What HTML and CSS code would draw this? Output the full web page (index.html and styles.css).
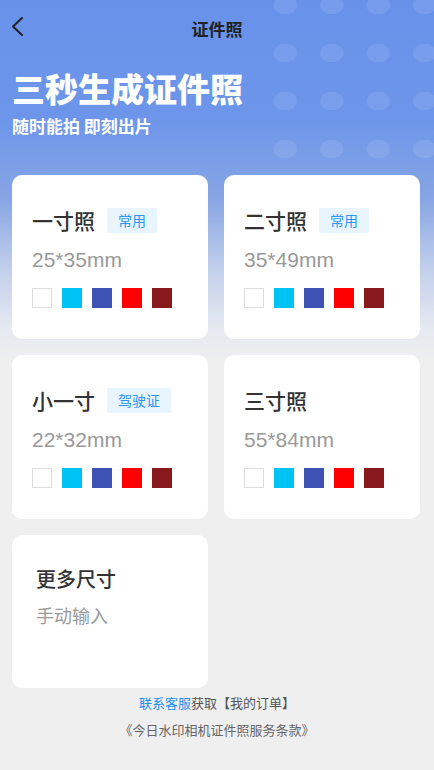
FILE: index.html
```html
<!DOCTYPE html>
<html lang="zh-CN">
<head>
    <meta charset="UTF-8">
    <meta name="viewport" content="width=device-width, initial-scale=1.0">
    <title>证件照</title>
    <link rel="stylesheet" href="styles.css">
</head>
<body>
    <div class="page">
        <div class="dots"></div>
        <div class="navbar">
            <span class="back">
                <svg width="14" height="22" viewBox="0 0 14 22"><path d="M11 2 L2 10.5 L11 19" fill="none" stroke="#222" stroke-width="2" stroke-linecap="round" stroke-linejoin="round"/></svg>
            </span>
            <div class="nav-title">证件照</div>
        </div>
        <div class="hero">
            <h1>三秒生成证件照</h1>
            <p>随时能拍 即刻出片</p>
        </div>

        <div class="grid">
            <div class="card">
                <div class="card-head">
                    <span class="card-title">一寸照</span>
                    <span class="tag">常用</span>
                </div>
                <div class="card-size">25*35mm</div>
                <div class="swatches">
                    <span class="sw white"></span><span class="sw sky"></span><span class="sw blue"></span><span class="sw red"></span><span class="sw wine"></span>
                </div>
            </div>
            <div class="card">
                <div class="card-head">
                    <span class="card-title">二寸照</span>
                    <span class="tag">常用</span>
                </div>
                <div class="card-size">35*49mm</div>
                <div class="swatches">
                    <span class="sw white"></span><span class="sw sky"></span><span class="sw blue"></span><span class="sw red"></span><span class="sw wine"></span>
                </div>
            </div>
            <div class="card">
                <div class="card-head">
                    <span class="card-title">小一寸</span>
                    <span class="tag">驾驶证</span>
                </div>
                <div class="card-size">22*32mm</div>
                <div class="swatches">
                    <span class="sw white"></span><span class="sw sky"></span><span class="sw blue"></span><span class="sw red"></span><span class="sw wine"></span>
                </div>
            </div>
            <div class="card">
                <div class="card-head">
                    <span class="card-title">三寸照</span>
                </div>
                <div class="card-size">55*84mm</div>
                <div class="swatches">
                    <span class="sw white"></span><span class="sw sky"></span><span class="sw blue"></span><span class="sw red"></span><span class="sw wine"></span>
                </div>
            </div>
            <div class="card card-more">
                <div class="more-title">更多尺寸</div>
                <div class="more-sub">手动输入</div>
            </div>
        </div>

        <div class="footer">
            <p><a href="#">联系客服</a>获取【我的订单】</p>
            <p class="terms">《今日水印相机证件照服务条款》</p>
        </div>
    </div>
</body>
</html>
```

FILE: styles.css
```css
html, body {
    margin: 0;
    padding: 0;
}
body {
    background-color: #efefef;
    font-family: "Noto Sans CJK SC", "Noto Sans", sans-serif;
    color: #333333;
}
.page {
    position: relative;
    min-height: 770px;
    overflow: hidden;
    background: linear-gradient(180deg, #6892ea 0px, #6d96ea 120px, #88a6e4 200px, #c3d0ec 270px, #e6e9f0 330px, #efefef 360px);
}
.dots {
    position: absolute;
    left: 262px;
    top: -19px;
    width: 200px;
    height: 192px;
    background-image: radial-gradient(ellipse 12px 9.5px at center, rgba(255, 255, 255, 0.09) 96%, rgba(255, 255, 255, 0) 100%);
    background-size: 46.5px 48px;
}
.navbar {
    position: relative;
    height: 56px;
    display: flex;
    align-items: center;
    justify-content: center;
}
.back {
    position: absolute;
    left: 11px;
    top: 16px;
    width: 14px;
    height: 22px;
}
.nav-title {
    font-size: 17px;
    font-weight: 700;
    color: #222222;
}
.hero {
    position: relative;
    padding: 10px 12px 0;
    color: #ffffff;
}
.hero h1 {
    margin: 0;
    font-size: 33px;
    line-height: 44px;
    font-weight: 900;
}
.hero p {
    margin: 4px 0 0;
    font-size: 17px;
    line-height: 24px;
    font-weight: 700;
}
.grid {
    position: relative;
    display: grid;
    grid-template-columns: 1fr 1fr;
    gap: 16px;
    padding: 37px 14px 0 12px;
}
.card {
    background-color: #ffffff;
    border-radius: 10px;
    height: 164px;
    box-sizing: border-box;
    padding: 31px 20px 0;
}
.card-head {
    display: flex;
    align-items: center;
    height: 28px;
}
.card-title {
    font-size: 21px;
    font-weight: 500;
    color: #333333;
}
.tag {
    margin-left: 12px;
    height: 25px;
    line-height: 25px;
    padding: 0 11px;
    border-radius: 2px;
    background-color: #e8f4fe;
    color: #2c95f4;
    font-size: 14px;
}
.card-size {
    margin-top: 12px;
    font-family: "Liberation Sans", Arial, sans-serif;
    font-size: 21px;
    line-height: 28px;
    color: #999999;
}
.swatches {
    display: flex;
    gap: 10px;
    margin-top: 14px;
}
.sw {
    width: 20px;
    height: 20px;
    box-sizing: border-box;
}
.sw.white { background-color: #ffffff; border: 1px solid #dddddd; }
.sw.sky { background-color: #00c3f5; }
.sw.blue { background-color: #3e52b6; }
.sw.red { background-color: #ff0000; }
.sw.wine { background-color: #88191d; }
.card-more {
    height: 153px;
    padding: 30px 24px 0;
}
.more-title {
    font-size: 20px;
    line-height: 28px;
    font-weight: 500;
    color: #333333;
}
.more-sub {
    margin-top: 9px;
    font-size: 18px;
    line-height: 26px;
    color: #999999;
}
.footer {
    position: relative;
    text-align: center;
    padding-top: 5px;
    font-size: 13px;
    color: #555555;
}
.footer p {
    margin: 0;
    line-height: 20px;
}
.footer a {
    color: #1e8ff0;
    text-decoration: none;
}
.footer .terms {
    margin-top: 7px;
    color: #666666;
}
```
